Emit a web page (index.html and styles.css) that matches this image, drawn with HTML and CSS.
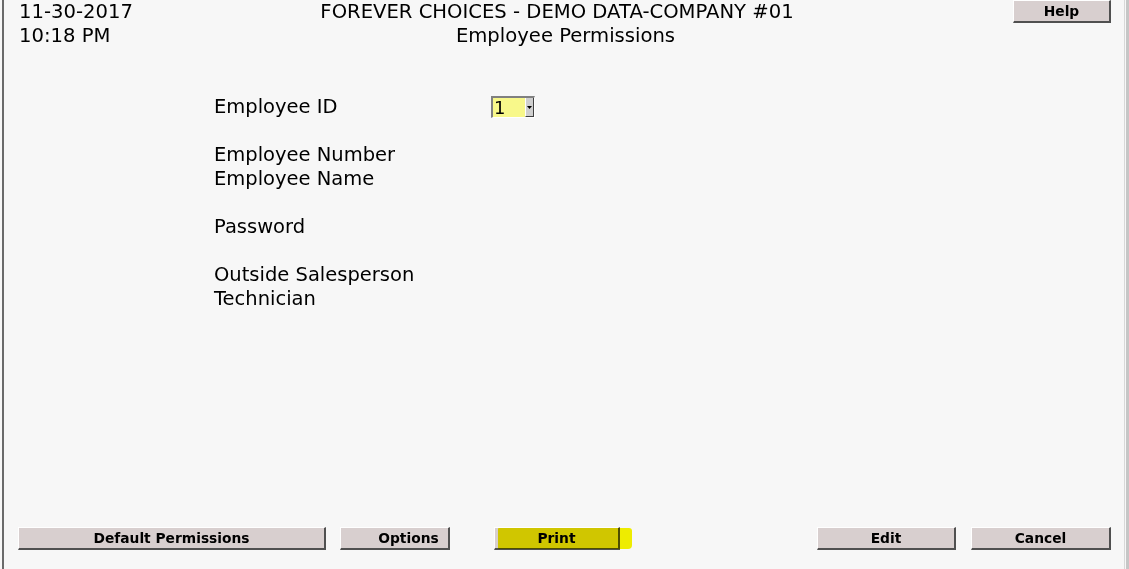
FILE: index.html
```html
<!DOCTYPE html>
<html>
<head>
<meta charset="utf-8">
<link rel="stylesheet" href="styles.css">
</head>
<body>
<div class="frame">
  <div class="main">
    <header class="top">
      <div class="stamp">
        <div>11-30-2017</div>
        <div>10:18 PM</div>
      </div>
      <div class="title">
        <div>FOREVER CHOICES - DEMO DATA-COMPANY #01</div>
        <div class="sub">Employee Permissions</div>
      </div>
      <div class="help-wrap"><button class="btn help">Help</button></div>
    </header>

    <section class="form">
      <div class="row">
        <span class="label">Employee ID</span>
        <span class="select">
          <span class="field">1</span>
          <span class="arrow"><svg width="5" height="3" viewBox="0 0 5 3"><path d="M0 0H5L2.5 3Z" fill="#000"/></svg></span>
        </span>
      </div>
      <div class="gap"></div>
      <div class="row"><span class="label">Employee Number</span></div>
      <div class="row"><span class="label">Employee Name</span></div>
      <div class="gap"></div>
      <div class="row"><span class="label">Password</span></div>
      <div class="gap"></div>
      <div class="row"><span class="label">Outside Salesperson</span></div>
      <div class="row"><span class="label">Technician</span></div>
    </section>

    <footer class="bottom">
      <button class="btn w-default">Default Permissions</button>
      <button class="btn w-options">Options</button>
      <span class="print-wrap">
        <button class="btn w-print">Print</button>
        <span class="marker"></span>
      </span>
      <button class="btn w-edit push">Edit</button>
      <button class="btn w-cancel">Cancel</button>
    </footer>
  </div>
  <div class="edge"></div>
</div>
</body>
</html>
```

FILE: styles.css
```css
html, body {
  margin: 0;
  padding: 0;
  background: #f7f7f7;
}
body {
  font-family: "DejaVu Sans", Verdana, sans-serif;
  color: #000;
  width: 1129px;
  height: 569px;
  overflow: hidden;
}
.frame {
  display: flex;
  height: 569px;
  padding-left: 2px;
}
.main {
  flex: 1;
  display: flex;
  flex-direction: column;
  border-left: 2px solid #6a6a6a;
  border-right: 1px solid #d8d8d8;
  margin-right: 1px;
}
.edge {
  width: 3px;
  background: #c6c6c6;
}
.top {
  display: grid;
  grid-template-columns: 300px 1fr 300px;
  font-size: 19.6px;
  line-height: 24px;
}
.stamp {
  padding-left: 15px;
}
.title {
  text-align: center;
  white-space: nowrap;
  padding-right: 14px;
}
.title .sub {
  padding-left: 17px;
}
.help-wrap {
  display: flex;
  justify-content: flex-end;
  padding-right: 13px;
}
.btn {
  font-family: "DejaVu Sans", Verdana, sans-serif;
  font-weight: bold;
  font-size: 13.8px;
  color: #000;
  background: #d8cfcf;
  border: 0;
  border-top: 1px solid #ffffff;
  border-left: 1px solid #ffffff;
  border-right: 2px solid #505050;
  border-bottom: 2px solid #505050;
  height: 23px;
  padding: 0 0 1px;
  margin: 0;
  box-sizing: border-box;
  text-align: center;
}
.help {
  width: 98px;
  height: 23px;
}
.form {
  flex: 1;
  padding-top: 47px;
  padding-left: 210px;
  font-size: 19.5px;
  line-height: 24px;
}
.row {
  display: flex;
  align-items: center;
  height: 24px;
}
.gap {
  height: 24px;
}
.label {
  width: 277px;
}
.select {
  display: inline-flex;
  height: 22px;
  box-sizing: border-box;
  border-top: 2px solid #808080;
  border-left: 2px solid #808080;
  border-right: 1px solid #ffffff;
  border-bottom: 1px solid #ffffff;
  background: #f8f88a;
}
.field {
  width: 31px;
  padding-left: 1px;
  font-size: 18px;
  line-height: 19px;
  font-family: "DejaVu Sans", Verdana, sans-serif;
}
.arrow {
  width: 9px;
  box-sizing: border-box;
  background: #cfcfcf;
  border-left: 1px solid #ffffff;
  border-right: 1px solid #404040;
  border-bottom: 1px solid #404040;
  display: flex;
  align-items: center;
  justify-content: center;
}
.bottom {
  display: flex;
  align-items: flex-start;
  padding: 0 13px 19px 14px;
  height: 23px;
}
.w-default { width: 308px; }
.w-options { width: 110px; margin-left: 14px; padding-left: 28px; }
.print-wrap {
  position: relative;
  margin-left: 44px;
  display: inline-flex;
}
.w-print { width: 126px; }
.marker {
  position: absolute;
  left: 4px;
  top: 1px;
  width: 134px;
  height: 21px;
  background: #f6f400;
  mix-blend-mode: multiply;
  border-radius: 1px 3px 4px 1px;
}
.w-edit { width: 139px; }
.push { margin-left: auto; }
.w-cancel { width: 140px; margin-left: 15px; }
```
